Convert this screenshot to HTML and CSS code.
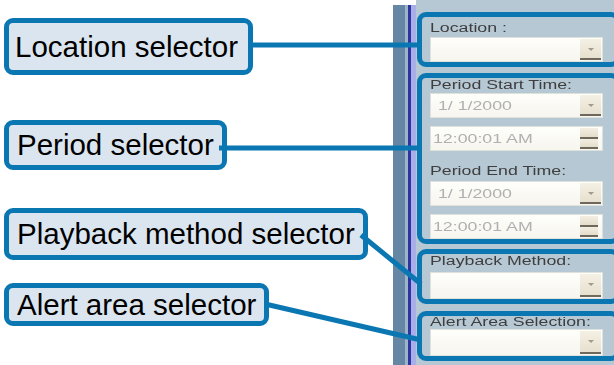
FILE: index.html
```html
<!DOCTYPE html>
<html>
<head>
<meta charset="utf-8">
<link rel="stylesheet" href="styles.css">
</head>
<body>
<div class="page">
  <div class="callouts">
    <div class="callout c-location">Location selector</div>
    <div class="callout c-period">Period selector</div>
    <div class="callout c-playback">Playback method selector</div>
    <div class="callout c-alert">Alert area selector</div>
  </div>
  <div class="rail">
    <div class="strip"></div>
    <div class="hl"></div>
    <div class="dk"></div>
    <div class="lav"></div>
    <div class="panel">
      <div class="group g-loc">
        <div class="lbl lbl-first"><span>Location :</span></div>
        <div class="field"><div class="val"></div><div class="btn"><i></i></div></div>
      </div>
      <div class="group g-period">
        <div class="lbl"><span>Period Start Time:</span></div>
        <div class="field f-date"><div class="val"><span>&nbsp;1/ 1/2000</span></div><div class="btn"><i></i></div></div>
        <div class="field f-time"><div class="val"><span>12:00:01 AM</span></div><div class="spin"><b></b><b></b></div></div>
        <div class="lbl lbl-end"><span>Period End Time:</span></div>
        <div class="field f-date"><div class="val"><span>&nbsp;1/ 1/2000</span></div><div class="btn"><i></i></div></div>
        <div class="field"><div class="val"><span>12:00:01 AM</span></div><div class="spin"><b></b><b></b></div></div>
      </div>
      <div class="group g-play">
        <div class="lbl lbl-gap"><span>Playback Method:</span></div>
        <div class="field f-tall"><div class="val"></div><div class="btn"><i></i></div></div>
      </div>
      <div class="group g-alert">
        <div class="lbl lbl-short"><span>Alert Area Selection:</span></div>
        <div class="field f-tall"><div class="val"></div><div class="btn"><i></i></div></div>
      </div>
    </div>
  </div>
  <svg class="leaders" width="614" height="365" viewBox="0 0 614 365">
    <line x1="250" y1="45" x2="421" y2="45"/>
    <line x1="219" y1="148" x2="421" y2="148"/>
    <line x1="361" y1="235" x2="421" y2="284"/>
    <line x1="265" y1="304" x2="421" y2="340"/>
  </svg>
</div>
</body>
</html>
```
FILE: styles.css
```css
html, body {
  margin: 0;
  background: #ffffff;
}
body {
  font-family: "Liberation Sans", Arial, sans-serif;
}
.page {
  position: relative;
  width: 614px;
  height: 365px;
  overflow: hidden;
  display: flex;
}
.callouts {
  width: 393px;
  flex: none;
  box-sizing: border-box;
  padding: 18px 0 0 4px;
  display: flex;
  flex-direction: column;
  align-items: flex-start;
}
.callout {
  box-sizing: border-box;
  border: 5px solid #0b77b2;
  border-radius: 9px;
  background: #dbe5ef;
  padding: 0 8px 0 8px;
  font-size: 29.5px;
  color: #000;
  white-space: nowrap;
}
.c-location { height: 57px; line-height: 47px; padding-left: 6px; padding-right: 10px; }
.c-period { margin-top: 45px; height: 50px; line-height: 40px; }
.c-playback { margin-top: 38px; height: 52px; line-height: 42px; }
.c-alert { margin-top: 23px; height: 43px; line-height: 33px; }

.rail {
  flex: 1;
  display: flex;
}
.strip { width: 12px; background: #6586a4; margin-top: 5px; }
.hl { width: 3px; background: #9fb3c6; margin-top: 5px; }
.dk { width: 3px; background: #2a36a2; margin-top: 5px; }
.lav { width: 5px; background: #a9aee8; margin-top: 5px; }
.panel {
  flex: 1;
  background: #b6c8d4;
  padding: 12px 0 0 1px;
  display: flex;
  flex-direction: column;
  align-items: flex-start;
}
.group {
  flex: none;
  box-sizing: border-box;
  width: 203px;
  border: 5px solid #0b77b2;
  border-radius: 9px;
  padding: 0 12px 0 8px;
}
.g-loc { padding-top: 4px; }
.g-period { margin-top: 6px; }
.g-play { margin-top: 5px; }
.g-alert { margin-top: 7px; }

.lbl {
  height: 15px;
  line-height: 15px;
  font-size: 12.5px;
  color: #3e3e3e;
  white-space: nowrap;
  filter: blur(0.45px);
}
.lbl span, .val span {
  display: inline-block;
  transform: scaleX(1.42);
  transform-origin: 0 50%;
}
.lbl-first { margin-bottom: 1px; }
.lbl-end { margin-top: 13px; margin-bottom: 2px; }
.lbl-gap { margin-bottom: 3px; }
.lbl-short { height: 13px; line-height: 12px; }

.field {
  height: 25px;
  box-sizing: border-box;
  display: flex;
  align-items: stretch;
  background: linear-gradient(#fefefb, #f6f5ee);
  border: 1px solid #dfe2dc;
  filter: blur(0.4px);
}
.f-date { margin-bottom: 8px; }
.f-tall { height: 27px; }
.val {
  flex: 1;
  display: flex;
  align-items: center;
  padding-left: 2px;
  font-size: 12.5px;
  color: #b0b0b0;
  white-space: nowrap;
  overflow: hidden;
}
.btn {
  position: relative;
  width: 21px;
  margin: 1px 1px 1px 0;
  background: linear-gradient(#f4f0e4, #e6e0cf);
  border-bottom: 2px solid #6f685c;
  box-sizing: border-box;
}
.btn i {
  position: absolute;
  left: 8px;
  top: 9px;
  width: 0;
  height: 0;
  border-left: 3px solid transparent;
  border-right: 3px solid transparent;
  border-top: 3px solid #a09a8c;
}
.spin {
  width: 18px;
  margin: 1px 4px 1px 0;
  display: flex;
  flex-direction: column;
}
.spin b {
  flex: 1;
  background: linear-gradient(#f2eee2, #e4ddcb);
  border-bottom: 2px solid #6f685c;
}
.leaders {
  position: absolute;
  left: 0;
  top: 0;
  pointer-events: none;
}
.leaders line {
  stroke: #0b77b2;
  stroke-width: 5;
}
```
